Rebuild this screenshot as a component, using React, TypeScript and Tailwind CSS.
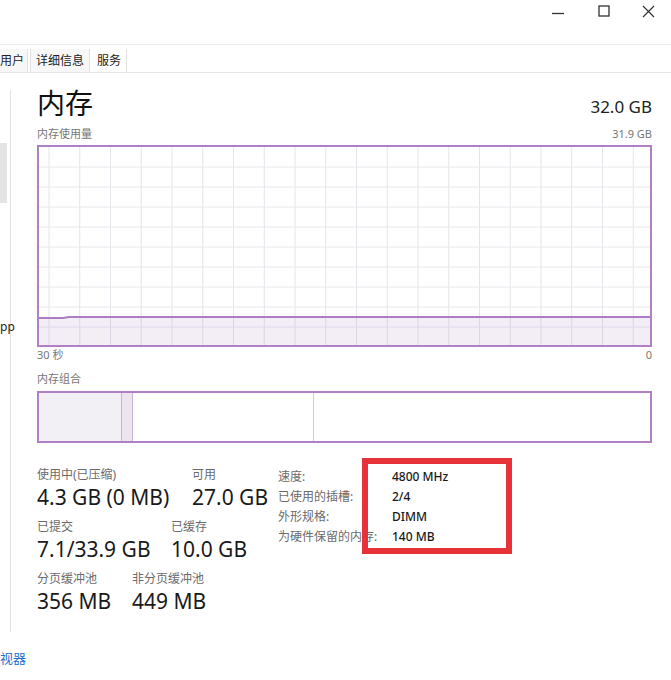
import React from 'react';

const sans = '"Noto Sans", "Noto Sans CJK SC", sans-serif';

function Graph() {
  const cols = Array.from({ length: 20 }, (_, i) => 10 + i * 30.75);
  const rows = Array.from({ length: 9 }, (_, i) => 20 + i * 20);
  return (
    <div className="h-[202px] w-full border-2 border-[#b07fc4]">
      <svg width="100%" height="100%" viewBox="0 0 611 198" preserveAspectRatio="none">
        {cols.map((x) => (
          <line key={x} x1={x} y1={0} x2={x} y2={198} stroke="#e8e2ea" strokeWidth={1} />
        ))}
        {rows.map((y) => (
          <line key={y} x1={0} y1={y} x2={611} y2={y} stroke="#ece6ee" strokeWidth={1} />
        ))}
        <path d="M0 171 L24 171 L30 170 L611 170 L611 198 L0 198 Z" fill="#a070b8" fillOpacity={0.12} />
        <path d="M0 171 L24 171 L30 170 L611 170" fill="none" stroke="#ad7cc2" strokeWidth={2} />
      </svg>
    </div>
  );
}

function Stat({ label, value, className = '' }: { label: string; value: string; className?: string }) {
  return (
    <div className={className}>
      <div className="text-[12px] leading-[16px] text-[#6b6b6b]">{label}</div>
      <div className="mt-[1px] text-[21px] leading-[26px] text-[#1a1a1a]">{value}</div>
    </div>
  );
}

export default function App() {
  const details = [
    ['速度:', '4800 MHz'],
    ['已使用的插槽:', '2/4'],
    ['外形规格:', 'DIMM'],
    ['为硬件保留的内存:', '140 MB'],
  ];

  return (
    <div className="relative h-[680px] w-[671px] overflow-hidden bg-white" style={{ fontFamily: sans }}>
      {/* title bar */}
      <div className="flex h-[45px] justify-end border-b border-[#ececec] pr-[1px]">
        <div className="flex h-[22px] w-[46px] items-center justify-center">
          <svg width="12" height="12" viewBox="0 0 12 12" fill="none">
            <line x1="0" y1="8.5" x2="12" y2="8.5" stroke="#333" strokeWidth="1.3" />
          </svg>
        </div>
        <div className="flex h-[22px] w-[46px] items-center justify-center">
          <svg width="12" height="12" viewBox="0 0 12 12" fill="none">
            <rect x="1" y="1" width="10" height="10" stroke="#333" strokeWidth="1.3" />
          </svg>
        </div>
        <div className="flex h-[22px] w-[43px] items-center justify-center">
          <svg width="13" height="13" viewBox="0 0 13 13" fill="none">
            <path d="M1 1 L12 12 M12 1 L1 12" stroke="#333" strokeWidth="1.2" />
          </svg>
        </div>
      </div>

      {/* tabs */}
      <div className="mt-[4px] flex h-[24px] items-stretch border-b border-[#e6e6e6] text-[12px] text-[#222]">
        <div className="flex items-center border-r border-[#e2e2e2] bg-[#f7f7f7] pr-[3px]">用户</div>
        <div className="ml-[2px] flex items-center border-x border-[#e2e2e2] bg-[#f7f7f7] px-[5px]">详细信息</div>
        <div className="ml-[2px] flex items-center border-r border-[#e2e2e2] px-[5px]">服务</div>
      </div>

      {/* body */}
      <div className="flex h-[576px]">
        {/* sidebar */}
        <div className="w-[11px] shrink-0 pt-[17px]">
          <div className="h-[542px] w-[11px] border-r border-[#e3e3e3] pt-[53px]">
            <div className="h-[60px] w-[7px] bg-[#e4e4e4]" />
            <div className="mt-[117px] text-[12px] leading-[14px] text-[#222]">pp</div>
          </div>
        </div>

        <div className="ml-[26px] w-[615px]">
          <div className="mt-[12px] flex items-end justify-between">
            <div className="text-[28px] leading-[36px] text-[#111]">内存</div>
            <div className="mb-[3px] text-[17px] leading-[22px] text-[#222]">32.0 GB</div>
          </div>
          <div className="mt-[6px] flex justify-between text-[11px] leading-[14px] text-[#777]">
            <span>内存使用量</span>
            <span>31.9 GB</span>
          </div>
          <div className="mt-[4px]">
            <Graph />
          </div>
          <div className="flex justify-between text-[11px] leading-[16px] text-[#777]">
            <span>30 秒</span>
            <span>0</span>
          </div>
          <div className="mt-[9px] text-[11px] leading-[14px] text-[#777]">内存组合</div>
          <div className="mt-[5px] flex h-[52px] border-2 border-[#b07fc4]">
            <div className="w-[82px] bg-[#f3f0f5]" />
            <div className="w-[12px] border-x border-[#c9b3d3] bg-[#ece5f0]" />
            <div className="w-[181px] border-r border-[#cfcfcf]" />
            <div className="flex-1" />
          </div>

          <div className="mt-[24px] flex">
            <div className="w-[241px]">
              <div className="flex">
                <Stat label="使用中(已压缩)" value="4.3 GB (0 MB)" className="w-[155px]" />
                <Stat label="可用" value="27.0 GB" />
              </div>
              <div className="mt-[9px] flex">
                <Stat label="已提交" value="7.1/33.9 GB" className="w-[134px]" />
                <Stat label="已缓存" value="10.0 GB" />
              </div>
              <div className="mt-[9px] flex">
                <Stat label="分页缓冲池" value="356 MB" className="w-[95px]" />
                <Stat label="非分页缓冲池" value="449 MB" />
              </div>
            </div>
            <div className="text-[12px] leading-[20px]">
              {details.map(([k, v]) => (
                <div key={k} className="flex">
                  <span className="w-[114px] text-[#6b6b6b]">{k}</span>
                  <span className="font-medium text-[#1a1a1a]">{v}</span>
                </div>
              ))}
            </div>
          </div>
        </div>
      </div>

      <div className="text-[13px] leading-[18px] text-[#1a6fc9]">视器</div>

      {/* annotation box */}
      <div className="absolute left-[362px] top-[458px] h-[96px] w-[150px] border-[6px] border-[#e8323a]" />
    </div>
  );
}
